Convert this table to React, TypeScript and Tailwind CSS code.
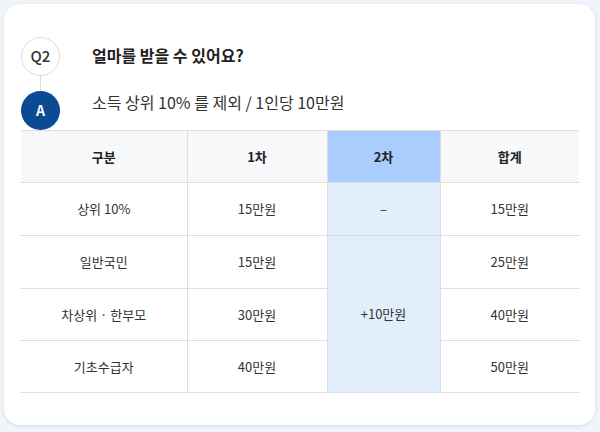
import React from "react";

const font = { fontFamily: '"Noto Sans CJK KR", "Noto Sans", sans-serif' };

export default function App() {
  const rows = [
    { label: "상위 10%", first: "15만원", total: "15만원", h: "h-[53px]" },
    { label: "일반국민", first: "15만원", total: "25만원", h: "h-[53px]" },
    { label: "차상위 · 한부모", first: "30만원", total: "40만원", h: "h-[52px]" },
    { label: "기초수급자", first: "40만원", total: "50만원", h: "h-[52px]" },
  ];
  const td = "border-b border-[#dddddd] text-center text-[13px] text-[#333333] p-0";
  const th = "h-[52px] border-b border-[#dddddd] text-[13px] font-bold text-[#222222] p-0";
  return (
    <div className="w-[600px] h-[432px] bg-[#f0f4fb] pt-[4px] pl-[4px]" style={font}>
      <div className="w-[591px] h-[421px] bg-white rounded-[16px] shadow-[0_1px_4px_rgba(0,0,0,0.10)] pl-[17px] pr-[16px] pt-[33px]">
        <div className="flex items-center">
          <div className="w-[39px] h-[39px] rounded-full border border-[#dddddd] flex items-center justify-center text-[15px] font-medium text-[#333333]">
            Q2
          </div>
          <div className="ml-[32px] text-[16px] font-bold text-[#222222] leading-[22px] -mt-[3px]">
            얼마를 받을 수 있어요?
          </div>
        </div>
        <div className="w-px h-[15px] bg-[#dddddd] ml-[19px]" />
        <div className="flex items-start">
          <div className="w-[39px] h-[39px] rounded-full bg-[#0b4b93] flex items-center justify-center text-[14px] font-bold text-white">
            A
          </div>
          <div className="ml-[32px] text-[16px] text-[#333333] leading-[22px]">
            소득 상위 10% 를 제외 / 1인당 10만원
          </div>
        </div>
        <table className="w-[558px] border-collapse border-t border-[#dddddd] table-fixed">
          <colgroup>
            <col className="w-[166px]" />
            <col className="w-[140px]" />
            <col className="w-[113px]" />
            <col className="w-[139px]" />
          </colgroup>
          <thead>
            <tr>
              <th className={`${th} bg-[#f7f8fa] border-r`}>구분</th>
              <th className={`${th} bg-[#f7f8fa] border-r`}>1차</th>
              <th className={`${th} bg-[#abcdfd] border-r`}>2차</th>
              <th className={`${th} bg-[#f7f8fa]`}>합계</th>
            </tr>
          </thead>
          <tbody>
            {rows.map((r, i) => (
              <tr key={i} className={r.h}>
                <td className={`${td} ${r.h} border-r`}>{r.label}</td>
                <td className={`${td} ${r.h} border-r`}>{r.first}</td>
                {i === 0 && <td className={`${td} border-r bg-[#e3eefd]`}>–</td>}
                {i === 1 && (
                  <td rowSpan={3} className={`${td} border-r bg-[#e3eefd]`}>
                    +10만원
                  </td>
                )}
                <td className={`${td} ${r.h}`}>{r.total}</td>
              </tr>
            ))}
          </tbody>
        </table>
      </div>
    </div>
  );
}
